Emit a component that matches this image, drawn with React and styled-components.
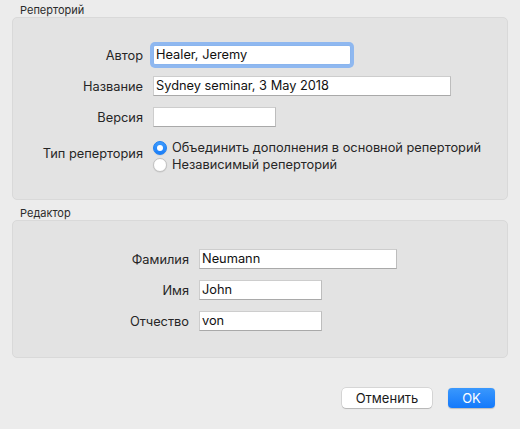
import * as React from "react";
import styled, { createGlobalStyle } from "styled-components";

const Global = createGlobalStyle`
  html, body {
    margin: 0;
    padding: 0;
    background: #ececec;
  }
  body {
    font-family: Inter, "Liberation Sans", Arial, sans-serif;
    color: #262626;
  }
`;

const Window = styled.div`
  width: 520px;
  height: 429px;
  box-sizing: border-box;
  padding: 4px 12px 0 12px;
  display: flex;
  flex-direction: column;
`;

const GroupTitle = styled.div`
  font-size: 11px;
  line-height: 13px;
  padding-left: 8px;
  color: #2b2b2b;
  margin-top: ${(p) => p.$top || 0}px;
`;

const Panel = styled.div`
  box-sizing: border-box;
  width: 496px;
  background: #e3e3e3;
  border: 1px solid #d9d9d9;
  border-radius: 5px;
  padding: ${(p) => p.$pad};
  display: grid;
  grid-template-columns: ${(p) => p.$label}px 1fr;
  column-gap: 10px;
  row-gap: 11px;
  align-items: center;
`;

const Label = styled.div`
  font-size: 12.8px;
  text-align: right;
  align-self: ${(p) => (p.$top ? "start" : "center")};
  margin-top: ${(p) => p.$top || 0}px;
`;

const Field = styled.div`
  box-sizing: border-box;
  width: ${(p) => p.$w}px;
  height: 20px;
  background: #fff;
  border: 1px solid #cdcdcd;
  border-bottom-color: #a9a9a9;
  border-right-color: #bdbdbd;
  font-size: 12.8px;
  line-height: 18px;
  padding-left: 2px;
  color: #111;
  white-space: nowrap;
  ${(p) =>
    p.$focus &&
    `
    border-color: #8ab5ee;
    box-shadow: 0 0 0 3px #8fb8f0;
    border-radius: 2px;
  `}
`;

const RadioGroup = styled.div`
  display: flex;
  flex-direction: column;
  gap: 3px;
  margin-top: 3px;
`;

const RadioRow = styled.div`
  display: flex;
  align-items: center;
  gap: 5px;
  font-size: 12.8px;
  line-height: 14px;
`;

const RadioDot = styled.span`
  box-sizing: border-box;
  width: 14px;
  height: 14px;
  border-radius: 50%;
  flex: none;
  display: flex;
  align-items: center;
  justify-content: center;
  background: ${(p) => (p.$on ? "linear-gradient(#3d9bfd, #1a7ef9)" : "#fff")};
  border: 1px solid ${(p) => (p.$on ? "#1d7ff2" : "#c2c2c2")};
  box-shadow: 0 0.5px 1px rgba(0, 0, 0, 0.12);
  &::after {
    content: "";
    display: ${(p) => (p.$on ? "block" : "none")};
    width: 6px;
    height: 6px;
    border-radius: 50%;
    background: #fff;
  }
`;

const Buttons = styled.div`
  display: flex;
  justify-content: flex-end;
  gap: 16px;
  margin-top: 30px;
  padding-right: 13px;
`;

const Button = styled.div`
  box-sizing: border-box;
  height: 20px;
  width: ${(p) => p.$w}px;
  border-radius: 4px;
  font-size: 13px;
  line-height: 20px;
  text-align: center;
  color: ${(p) => (p.$primary ? "#fff" : "#1a1a1a")};
  background: ${(p) => (p.$primary ? "linear-gradient(#3a98fd, #1479fb)" : "#fff")};
  box-shadow: ${(p) =>
    p.$primary
      ? "0 0.5px 1px rgba(0,0,0,0.2)"
      : "0 0 0 0.5px rgba(0,0,0,0.18), 0 1px 1px rgba(0,0,0,0.15)"};
`;

const radios = [
  { text: "Объединить дополнения в основной реперторий", on: true },
  { text: "Независимый реперторий", on: false },
];

export default function App() {
  return (
    <>
      <Global />
      <Window>
        <GroupTitle>Реперторий</GroupTitle>
        <Panel $label={130} $pad="27px 0 27px 0">
          <Label>Автор</Label>
          <Field $w={198} $focus>Healer, Jeremy</Field>
          <Label>Название</Label>
          <Field $w={298}>Sydney seminar, 3 May 2018</Field>
          <Label>Версия</Label>
          <Field $w={123} />
          <Label $top={8}>Тип репертория</Label>
          <RadioGroup>
            {radios.map((r) => (
              <RadioRow key={r.text}>
                <RadioDot $on={r.on} />
                {r.text}
              </RadioRow>
            ))}
          </RadioGroup>
        </Panel>
        <GroupTitle $top={7}>Редактор</GroupTitle>
        <Panel $label={176} $pad="28px 0 26px 0">
          <Label>Фамилия</Label>
          <Field $w={198}>Neumann</Field>
          <Label>Имя</Label>
          <Field $w={123}>John</Field>
          <Label>Отчество</Label>
          <Field $w={123}>von</Field>
        </Panel>
        <Buttons>
          <Button $w={90}>Отменить</Button>
          <Button $w={47} $primary>OK</Button>
        </Buttons>
      </Window>
    </>
  );
}
